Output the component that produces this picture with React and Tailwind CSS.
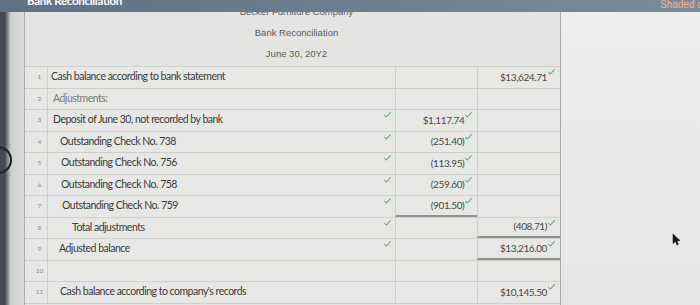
import React from 'react';

const rows = [
    { n: 1, label: 'Cash balance according to bank statement', pad: 'pl-[3px]', c: '$13,624.71' },
    { n: 2, label: 'Adjustments:', pad: 'pl-[5px]', muted: true },
    { n: 3, label: 'Deposit of June 30, not recorded by bank', pad: 'pl-[5px]', tick: true, b: '$1,117.74' },
    { n: 4, label: 'Outstanding Check No. 738', pad: 'pl-[12px]', tick: true, b: '(251.40)' },
    { n: 5, label: 'Outstanding Check No. 756', pad: 'pl-[13px]', tick: true, b: '(113.95)' },
    { n: 6, label: 'Outstanding Check No. 758', pad: 'pl-[13px]', tick: true, b: '(259.60)' },
    { n: 7, label: 'Outstanding Check No. 759', pad: 'pl-[14px]', tick: true, b: '(901.50)', bLine: true },
    { n: 8, label: 'Total adjustments', pad: 'pl-[24px]', tick: true, c: '(408.71)', cLine: true },
    { n: 9, label: 'Adjusted balance', pad: 'pl-[11px]', tick: true, c: '$13,216.00', cLine: true },
    { n: 10, label: '' },
    { n: 11, label: "Cash balance according to company's records", pad: 'pl-[12px]', c: '$10,145.50' },
];

function Tick() {
    return (
        <svg width="7" height="6" viewBox="0 0 7 6" className="mt-[2px] shrink-0 self-start">
            <path d="M0.6 3.4 L2.4 5 L6.4 0.6" fill="none" stroke="#6aa888" strokeWidth="1.1" strokeLinecap="round" strokeLinejoin="round" />
        </svg>
    );
}

function ValueCell({ value, line }) {
    return (
        <div
            className={`flex h-full w-[83px] items-center justify-end gap-[1px] border-l border-[#cfd0cc] pr-[5px] ${
                line ? 'border-b-2 border-b-[#8e908e]' : ''
            }`}
        >
            {value && (
                <>
                    <span className="text-[10px] tracking-[-0.4px] text-[#474747]">{value}</span>
                    <Tick />
                </>
            )}
        </div>
    );
}

export default function App() {
    return (
        <div className="relative flex h-[305px] w-[700px] flex-col overflow-hidden bg-[#e8e9e6] font-['Lato',sans-serif]">
            {/* title bar */}
            <div className="flex h-[12px] shrink-0 justify-between overflow-hidden bg-linear-to-r from-[#5f7084] to-[#7c8c9c]">
                <span className="ml-[27px] mt-[-5px] text-[11.5px] font-bold leading-[12px] tracking-[-0.3px] text-white">Bank Reconciliation</span>
                <span className="mt-[-1px] w-[40px] whitespace-nowrap font-['Liberation_Sans',sans-serif] text-[10px] leading-[12px] text-[#f3b48e]">
                    Shaded cells have feedback.
                </span>
            </div>

            <div className="flex flex-1">
                {/* left edge */}
                <div className="relative w-[24px] shrink-0 bg-linear-to-r from-[#45484c] from-[20%] via-[#cfd1d0] via-[45%] to-[#dadbd9]">
                    <div className="absolute left-[-16px] top-[134px] h-[28px] w-[28px] rounded-full border-2 border-[#1e1f21]" />
                </div>

                {/* worksheet */}
                <div className="flex w-[537px] shrink-0 flex-col border-l border-r border-[#a9aba9] bg-[#e4e5e2]">
                    <div className="flex h-[54px] shrink-0 flex-col items-center overflow-hidden pl-[8px] font-['Liberation_Sans',sans-serif] text-[9.5px] leading-[21px] text-[#5a5a5a]">
                        <div className="mt-[-11px]">Becker Furniture Company</div>
                        <div>Bank Reconciliation</div>
                        <div>June 30, 20Y2</div>
                    </div>

                    <div className="flex flex-col border-t border-[#cfd0cc]">
                        {rows.map((r) => (
                            <div key={r.n} className="flex h-[21.5px] border-b border-[#cfd0cc] bg-[#e7e8e5]">
                                <div className="flex w-[22px] shrink-0 items-center justify-center pl-[7px]">
                                    <span className="text-[6.5px] text-[#8a8a8a]">{r.n}</span>
                                </div>
                                <div className={`flex w-[349px] items-center justify-between border-l border-[#cfd0cc] pr-[4px] ${r.pad || ''}`}>
                                    <span className={`text-[10.5px] tracking-[-0.5px] ${r.muted ? 'text-[#7a7a7a]' : 'text-[#3a3a3a]'}`}>{r.label}</span>
                                    {r.tick && <Tick />}
                                </div>
                                <ValueCell value={r.b} line={r.bLine} />
                                <ValueCell value={r.c} line={r.cLine} />
                            </div>
                        ))}
                    </div>
                </div>

                {/* page background, right */}
                <div className="relative flex-1 bg-linear-to-b from-[#eeefed] to-[#e6e7e4]">
                    <svg width="9" height="13" viewBox="0 0 9 13" className="absolute left-[111px] top-[221px]">
                        <path d="M1 1 L1 10.5 L3.4 8.4 L5 12 L6.4 11.4 L4.9 7.9 L8 7.6 Z" fill="#1b1b1b" stroke="#1b1b1b" strokeWidth="0.6" strokeLinejoin="round" />
                    </svg>
                </div>
            </div>
        </div>
    );
}
